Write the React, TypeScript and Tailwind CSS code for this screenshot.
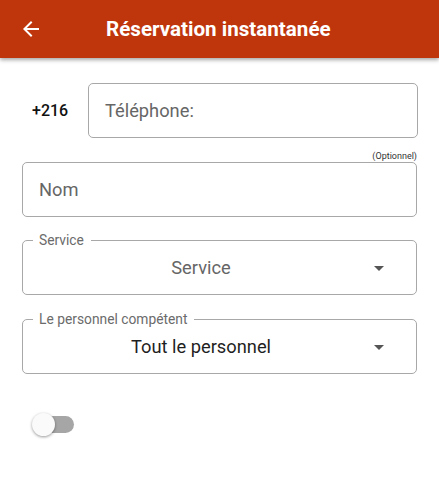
import React from "react";

function Select({ label, value, dark }: { label: string; value: string; dark?: boolean }) {
  return (
    <div className="relative mx-[22px] h-[55px] rounded-[5px] border border-[#a8a8a8] flex items-center">
      <span className="absolute left-[10px] -top-[9px] bg-white pl-[6px] pr-[7px] text-[13.8px] leading-[16px] text-[#6b6b6b]">{label}</span>
      <div className={`flex-1 text-center pl-[14px] text-[18.3px] ${dark ? "text-[#1f1f1f]" : "text-[#666]"}`}>{value}</div>
      <svg width="24" height="24" viewBox="0 0 24 24" className="mr-[25px] ml-[2px]">
        <path d="M7 10l5 5 5-5z" fill="#555" />
      </svg>
    </div>
  );
}

export default function App() {
  return (
    <div className="w-[439px] h-[493px] bg-white overflow-hidden" style={{ fontFamily: "Roboto, 'Noto Sans', sans-serif" }}>
      <div className="h-[58px] bg-[#bf360c] flex items-center shadow-[0_2px_4px_rgba(0,0,0,0.35)] relative z-10">
        <svg width="24" height="24" viewBox="0 0 24 24" className="ml-[19px]">
          <path d="M20 11H7.83l5.59-5.59L12 4l-8 8 8 8 1.41-1.41L7.83 13H20v-2z" fill="white" />
        </svg>
        <div className="ml-[63px] text-white text-[20.6px] font-bold">Réservation instantanée</div>
      </div>
      <div className="flex items-center mt-[25px]">
        <div className="w-[88px] pl-[32px] text-[16px] font-medium text-[#111]">+216</div>
        <div className="w-[330px] h-[55px] rounded-[5px] border border-[#a8a8a8] flex items-center pl-[16px] text-[18.3px] text-[#666]">
          Téléphone:
        </div>
      </div>
      <div className="text-right pr-[22px] text-[9px] leading-[12px] mt-[12px] text-[#333]">(Optionnel)</div>
      <div className="mx-[22px] h-[55px] rounded-[5px] border border-[#a8a8a8] flex items-center pl-[16px] text-[18.3px] text-[#666]">
        Nom
      </div>
      <div className="mt-[23px]">
        <Select label="Service" value="Service" />
      </div>
      <div className="mt-[24px]">
        <Select label="Le personnel compétent" value="Tout le personnel" dark />
      </div>
      <div className="relative ml-[33px] mt-[42px] w-[41px] h-[17px] rounded-full bg-[#a6a6a6]">
        <div className="absolute -left-[1px] -top-[3px] w-[23px] h-[23px] rounded-full bg-[#fafafa] shadow-[0_1px_3px_rgba(0,0,0,0.4)]" />
      </div>
    </div>
  );
}
